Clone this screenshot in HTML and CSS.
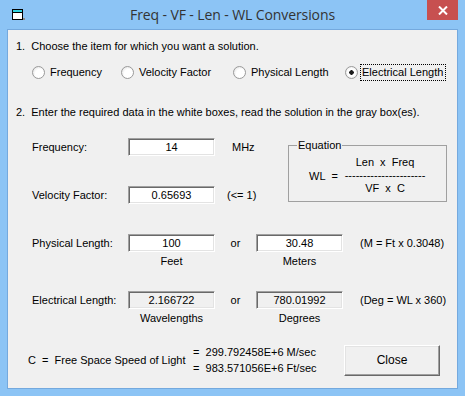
FILE: index.html
```html
<!DOCTYPE html>
<html lang="en">
<head>
    <meta charset="UTF-8">
    <title>Freq - VF - Len - WL Conversions</title>
    <link rel="stylesheet" href="styles.css">
</head>
<body>

<div class="window">
    <div class="titlebar">
        <div class="tb-left">
            <svg class="app-icon" width="13" height="12" viewBox="0 0 13 12">
                <rect x="0.5" y="0.5" width="10" height="10" fill="#fff" stroke="#000"/>
                <rect x="1" y="1" width="9" height="2" fill="#2fd3e0"/>
                <line x1="1" y1="3.5" x2="10" y2="3.5" stroke="#000"/>
                <rect x="11" y="9" width="2" height="2" fill="#8a8a8a"/>
            </svg>
        </div>
        <div class="title">Freq - VF - Len - WL Conversions</div>
        <div class="tb-right">
            <div class="close-x">
                <svg width="10" height="9" viewBox="0 0 10 9">
                    <path d="M1 0.5 L9 8.5 M9 0.5 L1 8.5" stroke="#fff" stroke-width="2"/>
                </svg>
            </div>
        </div>
    </div>

    <div class="client">
        <p class="step">1.&nbsp; Choose the item for which you want a solution.</p>

        <div class="radios">
            <label class="radio w1"><span class="dot"></span><span class="rtext">Frequency</span></label>
            <label class="radio w2"><span class="dot"></span><span class="rtext">Velocity Factor</span></label>
            <label class="radio w2"><span class="dot"></span><span class="rtext">Physical Length</span></label>
            <label class="radio"><span class="dot checked"></span><span class="rtext focus">Electrical Length</span></label>
        </div>

        <p class="step step2">2.&nbsp; Enter the required data in the white boxes, read the solution in the gray box(es).</p>

        <div class="upper">
            <div class="fields">
                <div class="row">
                    <span class="label">Frequency:</span>
                    <span class="box">14</span>
                    <span class="unit">MHz</span>
                </div>
                <div class="row row-gap">
                    <span class="label">Velocity Factor:</span>
                    <span class="box">0.65693</span>
                    <span class="unit unit-le">(&lt;= 1)</span>
                </div>
            </div>

            <div class="equation">
                <span class="group-title">Equation</span>
                <div class="eq">
                    <span class="wl">WL&nbsp;&nbsp;=</span>
                    <div class="frac">
                        <span>Len&nbsp;&nbsp;x&nbsp;&nbsp;Freq</span>
                        <span>----------------------</span>
                        <span>VF&nbsp;&nbsp;x&nbsp;&nbsp;C</span>
                    </div>
                </div>
            </div>
        </div>

        <div class="lengths">
            <span class="label">Physical Length:</span>
            <span class="box">100</span>
            <span class="or">or</span>
            <span class="box">30.48</span>
            <span class="note">(M = Ft x 0.3048)</span>
            <span></span>
            <span class="caption">Feet</span>
            <span></span>
            <span class="caption">Meters</span>
            <span></span>

            <span class="label spaced">Electrical Length:</span>
            <span class="box gray spaced">2.166722</span>
            <span class="or spaced">or</span>
            <span class="box gray spaced">780.01992</span>
            <span class="note spaced">(Deg = WL x 360)</span>
            <span></span>
            <span class="caption">Wavelengths</span>
            <span></span>
            <span class="caption">Degrees</span>
            <span></span>
        </div>

        <div class="bottom">
            <span class="c-label">C&nbsp;&nbsp;=&nbsp;&nbsp;Free Space Speed of Light</span>
            <div class="speeds">
                <span>=&nbsp;&nbsp;299.792458E+6 M/sec</span>
                <span>=&nbsp;&nbsp;983.571056E+6 Ft/sec</span>
            </div>
            <button class="close-btn">Close</button>
        </div>
    </div>
</div>

</body>
</html>
```

FILE: styles.css
```css
body {
    margin: 0;
    font-family: "Liberation Sans", Arial, sans-serif;
    font-size: 11px;
    color: #000;
}
.window {
    width: 465px;
    height: 396px;
    box-sizing: border-box;
    background: #8cc4f5;
    padding: 0 7px 7px;
    display: flex;
    flex-direction: column;
}
.titlebar {
    height: 29px;
    display: grid;
    grid-template-columns: 1fr auto 1fr;
}
.app-icon {
    display: block;
    margin: 9px 0 0 5px;
}
.title {
    font-family: "Open Sans", "Noto Sans", sans-serif;
    font-size: 14px;
    color: #333;
    padding-top: 5px;
    letter-spacing: -0.1px;
}
.tb-right {
    display: flex;
    justify-content: flex-end;
}
.close-x {
    width: 31px;
    height: 20px;
    background: #c75050;
    display: flex;
    align-items: center;
    justify-content: center;
}
.close-x svg {
    display: block;
}
.client {
    flex: 1;
    background: #f0f0f0;
    border: 1px solid #74a9de;
}
.step {
    margin: 10px 0 0 8px;
    line-height: 13px;
}
.step2 {
    margin-top: 26px;
}
.radios {
    display: flex;
    align-items: center;
    height: 16px;
    margin-top: 11px;
    padding-left: 24px;
}
.radio {
    display: flex;
    align-items: center;
}
.w1 {
    width: 89px;
}
.w2 {
    width: 112px;
}
.dot {
    width: 13px;
    height: 13px;
    box-sizing: border-box;
    border-radius: 50%;
    border: 1px solid #9a9a9a;
    background: radial-gradient(circle at 60% 60%, #fff 0, #fff 45%, #d8d8d8 100%);
}
.dot.checked {
    background: radial-gradient(circle, #1c1c1c 0, #1c1c1c 2px, #fff 2.5px, #fff 50%, #d8d8d8 100%);
}
.rtext {
    margin-left: 5px;
    line-height: 13px;
}
.focus {
    margin-left: 2px;
    padding: 1px 2px 1px 1px;
    border: 1px dotted #000;
}
.upper {
    display: flex;
    align-items: flex-start;
    height: 66px;
    margin-top: 19px;
    padding: 0 10px 0 24px;
}
.fields {
    flex: 1;
}
.row {
    display: flex;
    align-items: center;
    height: 18px;
}
.row-gap {
    margin-top: 30px;
}
.label {
    width: 96px;
    line-height: 13px;
}
.box {
    width: 87px;
    height: 18px;
    box-sizing: border-box;
    background: #fff;
    border: 1px solid;
    border-color: #a0a0a0 #fff #fff #a0a0a0;
    box-shadow: inset 1px 1px 0 #696969, inset -1px -1px 0 #e3e3e3;
    text-align: center;
    line-height: 15px;
    padding-top: 1px;
}
.box.gray {
    background: #f0f0f0;
}
.unit {
    margin-left: 17px;
}
.unit-le {
    margin-left: 12px;
}
.equation {
    width: 159px;
    height: 57px;
    box-sizing: border-box;
    margin-top: 7px;
    border: 1px solid #a0a0a0;
}
.group-title {
    display: block;
    width: max-content;
    margin: -7px 0 0 8px;
    padding: 0 1px;
    background: #f0f0f0;
    line-height: 13px;
}
.eq {
    display: flex;
    align-items: center;
    margin-top: 4px;
    padding-left: 20px;
}
.wl {
    width: 36px;
}
.frac {
    width: 80px;
    display: flex;
    flex-direction: column;
    align-items: center;
    line-height: 13px;
    white-space: nowrap;
}
.lengths {
    display: grid;
    grid-template-columns: 96px 87px 41px 87px auto;
    align-items: center;
    margin-top: 30px;
    padding-left: 24px;
}
.or {
    text-align: center;
}
.note {
    margin-left: 17px;
}
.caption {
    text-align: center;
    line-height: 13px;
    margin-top: 3px;
}
.spaced {
    margin-top: 23px;
}
.bottom {
    display: flex;
    align-items: center;
    margin-top: 19px;
    padding: 0 17px 0 20px;
}
.c-label {
    width: 165px;
}
.speeds {
    display: flex;
    flex-direction: column;
    line-height: 16px;
}
.close-btn {
    margin-left: auto;
    width: 96px;
    height: 31px;
    font: inherit;
    font-size: 12px;
    color: #000;
    background: #f0f0f0;
    border: 1px solid;
    border-color: #fff #696969 #696969 #fff;
    box-shadow: inset -1px -1px 0 #a0a0a0, inset 1px 1px 0 #e3e3e3;
    padding: 0;
}
```
